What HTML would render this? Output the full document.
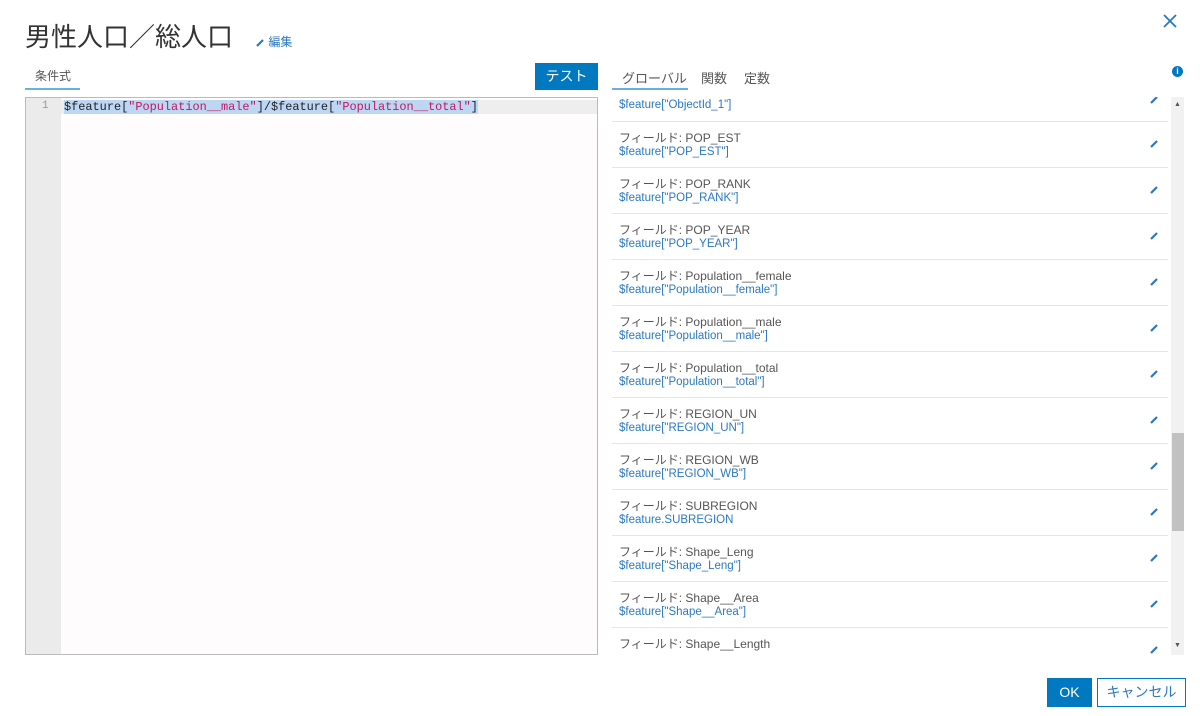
<!DOCTYPE html>
<html><head><meta charset="utf-8"><style>
body{margin:0;width:1200px;height:716px;background:#fff;font-family:"Liberation Sans","Noto Sans CJK JP",sans-serif;position:relative;overflow:hidden;color:#4a4a4a}
.a{position:absolute}
.title{left:25px;top:17px;font-size:26px;color:#333}
.edit{left:255px;top:33px;font-size:12px;color:#2b78c2}
.tab1{left:35px;top:67px;font-size:12px;color:#555}
.ul1{left:25px;top:88px;width:55px;height:2px;background:#6ab0dc}
.test{left:535px;top:63px;width:63px;height:27px;background:#0079c1;color:#fff;font-size:14px;text-align:center;line-height:27px}
.editor{left:25px;top:97px;width:571px;height:556px;border:1px solid #bbb;background:#fefcfc}
.gut{left:0;top:0;width:35px;height:556px;background:#ebebeb}
.line{left:0;top:2px;height:14px;width:571px;background:#eee}
.code{left:38px;top:2px;font-family:"Liberation Mono",monospace;font-size:11.9px;background:#bcd6f4;color:#222;line-height:14px}
.code span{color:#c2185b}
.tabs{top:68px;font-size:13px;color:#555}
.ul2{left:612px;top:88px;width:76px;height:2px;background:#6ab0dc}
.info{left:1172px;top:66px;width:11px;height:11px;border-radius:50%;background:#0079c1;color:#fff;font-size:9px;font-weight:bold;text-align:center;line-height:11px}
.row{left:612px;width:556px;height:45px;border-bottom:1px solid #e6e6e6}
.row .l{position:absolute;left:7px;top:7px;font-size:12px;color:#555}
.row .c{position:absolute;left:7px;top:24px;font-size:11.5px;color:#2b78c2}
.row svg{position:absolute;left:537px;top:17px}
.sb{left:1171px;top:97px;width:13px;height:558px;background:#f1f1f1}
.thumb{left:1172px;top:433px;width:12px;height:98px;background:#c1c1c1}
.ok{left:1047px;top:678px;width:45px;height:29px;background:#0079c1;color:#fff;font-size:14px;text-align:center;line-height:29px}
.cancel{left:1097px;top:678px;width:87px;height:27px;border:1px solid #0079c1;color:#2b78c2;font-size:14px;text-align:center;line-height:27px}
</style></head><body>
<div class="a title">男性人口／総人口</div>
<div class="a edit"><svg width="10" height="10" style="vertical-align:-1px"><path d="M2 9L8 3" stroke="#2b78c2" stroke-width="2.2"/></svg> 編集</div>
<svg class="a" style="left:1163px;top:14px" width="14" height="14"><path d="M1 1L13 13M13 1L1 13" stroke="#2b78c2" stroke-width="1.8"/></svg>
<div class="a tab1">条件式</div><div class="a ul1"></div>
<div class="a test">テスト</div>
<div class="a editor">
<div class="a line"></div>
<div class="a gut"><div style="position:absolute;left:16px;top:2px;font-family:'Liberation Mono',monospace;font-size:11px;color:#999">1</div></div>
<div class="a code">$feature[<span>"Population__male"</span>]/$feature[<span>"Population__total"</span>]</div>
</div>
<div class="a tabs" style="left:622px">グローバル</div>
<div class="a tabs" style="left:701px">関数</div>
<div class="a tabs" style="left:744px">定数</div>
<div class="a ul2"></div>
<div class="a info">i</div>
<div class="a" style="left:612px;top:97px;width:556px;height:24px;overflow:hidden;border-bottom:1px solid #e6e6e6"><div style="position:absolute;left:7px;top:2px;font-size:11.5px;color:#2b78c2">$feature["ObjectId_1"]</div><svg style="position:absolute;left:537px;top:-2px" width="10" height="10"><path d="M2 8L8 2" stroke="#2b78c2" stroke-width="2.2"/></svg></div>
<div class="a row" style="top:122px"><div class="l">フィールド: POP_EST</div><div class="c">$feature["POP_EST"]</div><svg width="10" height="10"><path d="M2 8L8 2" stroke="#2b78c2" stroke-width="2.2"/></svg></div>
<div class="a row" style="top:168px"><div class="l">フィールド: POP_RANK</div><div class="c">$feature["POP_RANK"]</div><svg width="10" height="10"><path d="M2 8L8 2" stroke="#2b78c2" stroke-width="2.2"/></svg></div>
<div class="a row" style="top:214px"><div class="l">フィールド: POP_YEAR</div><div class="c">$feature["POP_YEAR"]</div><svg width="10" height="10"><path d="M2 8L8 2" stroke="#2b78c2" stroke-width="2.2"/></svg></div>
<div class="a row" style="top:260px"><div class="l">フィールド: Population__female</div><div class="c">$feature["Population__female"]</div><svg width="10" height="10"><path d="M2 8L8 2" stroke="#2b78c2" stroke-width="2.2"/></svg></div>
<div class="a row" style="top:306px"><div class="l">フィールド: Population__male</div><div class="c">$feature["Population__male"]</div><svg width="10" height="10"><path d="M2 8L8 2" stroke="#2b78c2" stroke-width="2.2"/></svg></div>
<div class="a row" style="top:352px"><div class="l">フィールド: Population__total</div><div class="c">$feature["Population__total"]</div><svg width="10" height="10"><path d="M2 8L8 2" stroke="#2b78c2" stroke-width="2.2"/></svg></div>
<div class="a row" style="top:398px"><div class="l">フィールド: REGION_UN</div><div class="c">$feature["REGION_UN"]</div><svg width="10" height="10"><path d="M2 8L8 2" stroke="#2b78c2" stroke-width="2.2"/></svg></div>
<div class="a row" style="top:444px"><div class="l">フィールド: REGION_WB</div><div class="c">$feature["REGION_WB"]</div><svg width="10" height="10"><path d="M2 8L8 2" stroke="#2b78c2" stroke-width="2.2"/></svg></div>
<div class="a row" style="top:490px"><div class="l">フィールド: SUBREGION</div><div class="c">$feature.SUBREGION</div><svg width="10" height="10"><path d="M2 8L8 2" stroke="#2b78c2" stroke-width="2.2"/></svg></div>
<div class="a row" style="top:536px"><div class="l">フィールド: Shape_Leng</div><div class="c">$feature["Shape_Leng"]</div><svg width="10" height="10"><path d="M2 8L8 2" stroke="#2b78c2" stroke-width="2.2"/></svg></div>
<div class="a row" style="top:582px"><div class="l">フィールド: Shape__Area</div><div class="c">$feature["Shape__Area"]</div><svg width="10" height="10"><path d="M2 8L8 2" stroke="#2b78c2" stroke-width="2.2"/></svg></div>
<div class="a row" style="top:628px;height:27px;border:none;overflow:hidden"><div class="l">フィールド: Shape__Length</div><svg width="10" height="10"><path d="M2 8L8 2" stroke="#2b78c2" stroke-width="2.2"/></svg></div>
<div class="a sb"></div><div class="a thumb"></div>
<div class="a" style="left:1174px;top:101px;font-size:7px;color:#555">▲</div>
<div class="a" style="left:1174px;top:642px;font-size:7px;color:#555">▼</div>
<div class="a ok">OK</div>
<div class="a cancel">キャンセル</div>
</body></html>
